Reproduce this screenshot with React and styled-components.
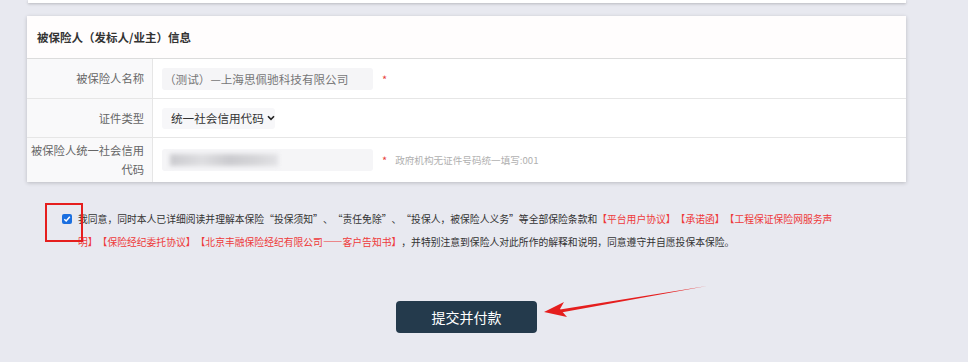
import React from 'react';
import styled, { createGlobalStyle } from 'styled-components';

const GlobalStyle = createGlobalStyle`
  html, body {
    margin: 0;
    padding: 0;
    background: #e8e9f0;
    font-family: "Noto Sans CJK SC", "Noto Sans", sans-serif;
    color: #333;
  }
`;

const Page = styled.div`
  position: relative;
  width: 968px;
  height: 362px;
  overflow: hidden;
`;

const Content = styled.div`
  width: 879px;
  margin-left: 27px;
`;

const PrevCard = styled.div`
  height: 3px;
  margin-left: 1px;
  background: #fff;
  box-shadow: 0 1px 3px rgba(0, 0, 0, 0.22);
`;

const Card = styled.section`
  margin-top: 13px;
  background: #fff;
  box-shadow: 0 1px 4px rgba(0, 0, 0, 0.2);
`;

const CardHeader = styled.div`
  height: 42px;
  display: flex;
  align-items: center;
  padding-left: 10px;
  font-size: 11.5px;
  font-weight: 700;
  color: #333;
  background: #fffdfd;
  border-bottom: 1px solid #dcdcdc;
`;

const Row = styled.div`
  display: flex;
  min-height: ${(p) => p.h}px;
  border-bottom: ${(p) => (p.last ? 'none' : '1px solid #e6e6e6')};
`;

const Label = styled.div`
  width: 126px;
  box-sizing: border-box;
  flex-shrink: 0;
  display: flex;
  align-items: center;
  justify-content: flex-end;
  text-align: right;
  padding: 0 8px 0 4px;
  background: #f9f9fa;
  border-right: 1px solid #e6e6e6;
  font-size: 11.3px;
  line-height: 19px;
  color: #666;
`;

const Value = styled.div`
  flex: 1;
  display: flex;
  align-items: center;
  padding-left: 9px;
`;

const Input = styled.div`
  width: 211px;
  height: 22px;
  box-sizing: border-box;
  display: flex;
  align-items: center;
  padding-left: 2px;
  border-radius: 3px;
  background: #f5f5f7;
  font-size: 11.6px;
  color: #777;
  overflow: hidden;
  text-spacing-trim: space-all;
`;

const Blur = styled.div`
  width: 108px;
  height: 12px;
  margin-left: 6px;
  background: linear-gradient(90deg, #cbcbcf 0%, #dedee1 30%, #cbcbcf 55%, #d6d6d9 80%, #e2e2e5 100%);
  filter: blur(2px);
`;

const Select = styled.div`
  width: 113px;
  height: 21px;
  box-sizing: border-box;
  display: flex;
  align-items: center;
  gap: 3px;
  padding-left: 9px;
  border-radius: 3px;
  background: #f7f7f9;
  font-size: 11.6px;
  color: #333;
`;

const Star = styled.span`
  margin-left: 9px;
  color: #e8433e;
  font-size: 11px;
`;

const Hint = styled.span`
  margin-left: 8px;
  font-size: 9.6px;
  color: #b0b0b0;
`;

const Agree = styled.div`
  display: flex;
  align-items: flex-start;
  margin-top: 26px;
  padding-left: 35px;
`;

const Check = styled.span`
  width: 10px;
  height: 10px;
  margin-top: 6px;
  margin-right: 6px;
  flex-shrink: 0;
  border-radius: 2px;
  background: #1b6fe0;
  display: flex;
  align-items: center;
  justify-content: center;
`;

const AgreeText = styled.p`
  margin: 0;
  width: 770px;
  font-size: 9.8px;
  line-height: 23px;
  color: #333;
  font-feature-settings: "fwid";
  text-spacing-trim: space-all;
`;

const Red = styled.span`
  color: #ee3a3a;
`;

const ButtonRow = styled.div`
  display: flex;
  justify-content: center;
  margin-top: 47px;
`;

const Submit = styled.button`
  width: 141px;
  height: 32px;
  border: none;
  border-radius: 4px;
  background: #243a4c;
  color: #fff;
  font-family: inherit;
  font-size: 14px;
  cursor: pointer;
`;

const Mark = styled.div`
  position: absolute;
  left: 45px;
  top: 203px;
  width: 38px;
  height: 39px;
  box-sizing: border-box;
  border: 2px solid #e51e1e;
`;

const Arrow = styled.svg`
  position: absolute;
  left: 540px;
  top: 280px;
`;

export default function App() {
  return (
    <Page>
      <GlobalStyle />
      <Content>
        <PrevCard />
        <Card>
          <CardHeader>被保险人（发标人/业主）信息</CardHeader>
          <Row h={39}>
            <Label>被保险人名称</Label>
            <Value>
              <Input>（测试）—上海思佩驰科技有限公司</Input>
              <Star>*</Star>
            </Value>
          </Row>
          <Row h={38}>
            <Label>证件类型</Label>
            <Value>
              <Select>
                统一社会信用代码
                <svg width="8" height="6" viewBox="0 0 8 6">
                  <path d="M1 1.2 L4 4.4 L7 1.2" fill="none" stroke="#222" strokeWidth="1.6" />
                </svg>
              </Select>
            </Value>
          </Row>
          <Row h={44} last>
            <Label>被保险人统一社会信用代码</Label>
            <Value>
              <Input>
                <Blur />
              </Input>
              <Star>*</Star>
              <Hint>政府机构无证件号码统一填写:001</Hint>
            </Value>
          </Row>
        </Card>
        <Agree>
          <Check>
            <svg width="8" height="8" viewBox="0 0 8 8">
              <path d="M1.3 4.2 L3.2 6 L6.8 1.8" fill="none" stroke="#fff" strokeWidth="1.5" />
            </svg>
          </Check>
          <AgreeText>
            我同意，同时本人已详细阅读并理解本保险“投保须知”、“责任免除”、“投保人，被保险人义务”等全部保险条款和
            <Red>【平台用户协议】【承诺函】【工程保证保险网服务声明】【保险经纪委托协议】【北京丰融保险经纪有限公司——客户告知书】</Red>
            ，并特别注意到保险人对此所作的解释和说明，同意遵守并自愿投保本保险。
          </AgreeText>
        </Agree>
        <ButtonRow>
          <Submit>提交并付款</Submit>
        </ButtonRow>
      </Content>
      <Mark />
      <Arrow width="175" height="40" viewBox="0 0 175 40">
        <path d="M167 6 L20 29.5 L21 32.5 Z" fill="#e51e1e" />
        <path d="M4 32 L24 22 L20 29 L27 37 Z" fill="#e51e1e" />
      </Arrow>
    </Page>
  );
}
